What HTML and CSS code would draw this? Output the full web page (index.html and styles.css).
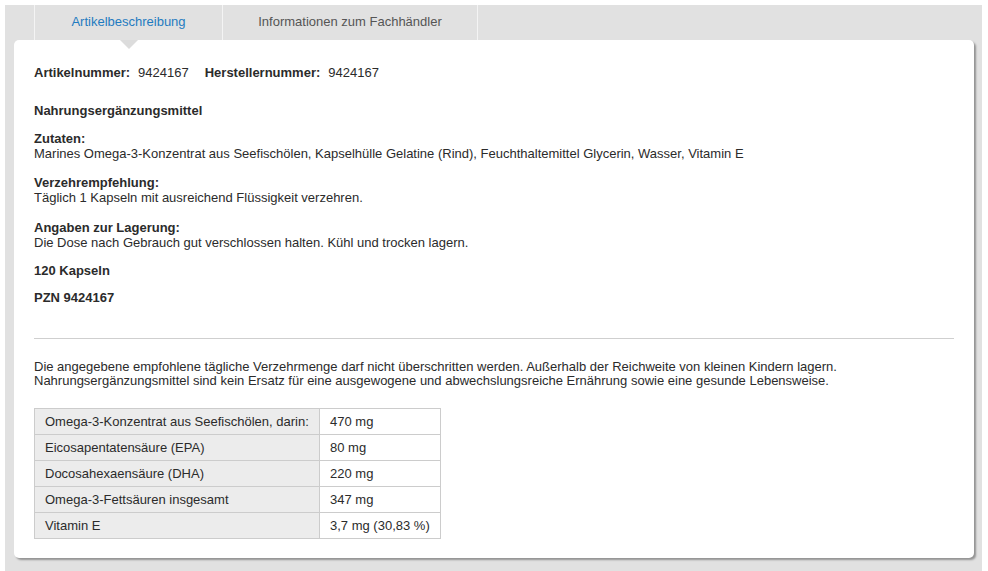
FILE: index.html
```html
<!DOCTYPE html>
<html lang="de">
<head>
<meta charset="utf-8">
<title>Artikelbeschreibung</title>
<link rel="stylesheet" href="styles.css">
</head>
<body>
<div class="wrap">
  <ul class="tabs">
    <li class="tab active">Artikelbeschreibung</li>
    <li class="tab">Informationen zum Fachhändler</li>
  </ul>
  <div class="panel">
    <p class="ids"><b>Artikelnummer:</b><span class="val">9424167</span><b>Herstellernummer:</b><span class="val">9424167</span></p>
    <p class="title"><b>Nahrungsergänzungsmittel</b></p>
    <p class="block b1"><b>Zutaten:</b><br>Marines Omega-3-Konzentrat aus Seefischölen, Kapselhülle Gelatine (Rind), Feuchthaltemittel Glycerin, Wasser, Vitamin E</p>
    <p class="block b2"><b>Verzehrempfehlung:</b><br>Täglich 1 Kapseln mit ausreichend Flüssigkeit verzehren.</p>
    <p class="block b3"><b>Angaben zur Lagerung:</b><br>Die Dose nach Gebrauch gut verschlossen halten. Kühl und trocken lagern.</p>
    <p class="block b4"><b>120 Kapseln</b></p>
    <p class="block b5"><b>PZN 9424167</b></p>
    <hr class="rule">
    <p class="note">Die angegebene empfohlene tägliche Verzehrmenge darf nicht überschritten werden. Außerhalb der Reichweite von kleinen Kindern lagern.<br>Nahrungsergänzungsmittel sind kein Ersatz für eine ausgewogene und abwechslungsreiche Ernährung sowie eine gesunde Lebensweise.</p>
    <table class="nutri">
      <tr><td class="k">Omega-3-Konzentrat aus Seefischölen, darin:</td><td class="v">470 mg</td></tr>
      <tr><td class="k">Eicosapentatensäure (EPA)</td><td class="v">80 mg</td></tr>
      <tr><td class="k">Docosahexaensäure (DHA)</td><td class="v">220 mg</td></tr>
      <tr><td class="k">Omega-3-Fettsäuren insgesamt</td><td class="v">347 mg</td></tr>
      <tr><td class="k">Vitamin E</td><td class="v">3,7 mg (30,83 %)</td></tr>
    </table>
  </div>
</div>
</body>
</html>
```
FILE: styles.css
```css
html, body {
  margin: 0;
  padding: 0;
  background: #ffffff;
}
body {
  font-family: "Liberation Sans", Arial, Helvetica, sans-serif;
  font-size: 13px;
  color: #2b2b2b;
}
.wrap {
  margin: 5px 6px 0 5px;
  background: #e1e1e1;
  padding: 0 8px 12px 9px;
  height: 566px;
  box-sizing: border-box;
}
.tabs {
  list-style: none;
  margin: 0;
  padding: 0 0 0 20px;
  display: flex;
  height: 35px;
}
.tab {
  position: relative;
  height: 35px;
  line-height: 34px;
  font-size: 13px;
  color: #555555;
  text-align: center;
  border-left: 1px solid #f4f4f4;
  box-sizing: border-box;
}
.tab:first-child { width: 188px; }
.tab:nth-child(2) {
  width: 256px;
  border-right: 1px solid #f4f4f4;
}
.tab.active { color: #1f7bc0; }
.tab.active::after {
  content: "";
  position: absolute;
  left: 50%;
  top: 35px;
  margin-left: -9px;
  border-left: 9px solid transparent;
  border-right: 9px solid transparent;
  border-top: 9px solid #dcdcdc;
  z-index: 2;
}
.panel {
  position: relative;
  background: #ffffff;
  border-radius: 5px;
  box-shadow: 2px 2px 2px rgba(0, 0, 0, 0.35);
  padding: 25px 20px 19px 20px;
  width: 960px;
  box-sizing: border-box;
}
.panel p {
  margin: 0;
  line-height: 15px;
}
.ids .val {
  margin: 0 16px 0 8px;
}
.ids { margin-bottom: 23px !important; }
.title { margin-bottom: 13px !important; }
.b1 { margin-bottom: 14px !important; }
.b2 { margin-bottom: 15px !important; }
.b3 { margin-bottom: 13px !important; }
.b4 { margin-bottom: 12px !important; }
.rule {
  border: 0;
  border-top: 1px solid #cfcfcf;
  margin: 33px 0 21px 0;
  height: 0;
}
.panel .note {
  line-height: 14px;
  margin-bottom: 20px;
}
.nutri {
  border-collapse: collapse;
}
.nutri td {
  border: 1px solid #cccccc;
  height: 26px;
  padding: 0 10px;
  box-sizing: border-box;
  vertical-align: middle;
}
.nutri .k {
  background: #ececec;
  width: 285px;
}
.nutri .v {
  width: 121px;
}
```
